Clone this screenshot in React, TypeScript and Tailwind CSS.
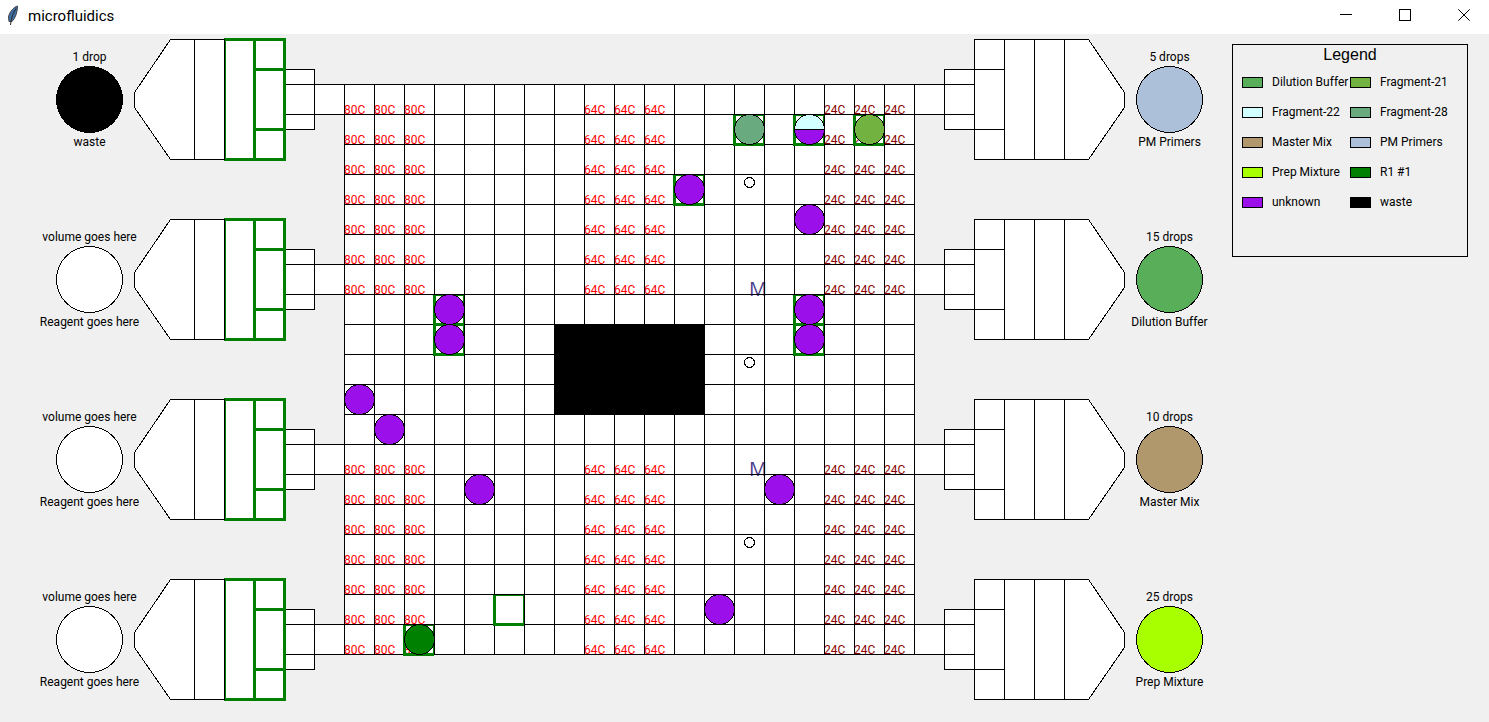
import React from "react";

type Tone = "dilution" | "f21" | "f22" | "f28" | "master" | "pm" | "prep" | "r1" | "unknown" | "waste" | "none";

const FILL: Record<Tone, string> = {
  dilution: "fill-[#59ae59]",
  f21: "fill-[#72b240]",
  f22: "fill-[#d2ffff]",
  f28: "fill-[#69ab7e]",
  master: "fill-[#b1986c]",
  pm: "fill-[#acc1d9]",
  prep: "fill-[#a8ff00]",
  r1: "fill-[#008000]",
  unknown: "fill-[#9a0fea]",
  waste: "fill-black",
  none: "fill-white",
};

const SWATCH: Record<Tone, string> = {
  dilution: "bg-[#59ae59]",
  f21: "bg-[#72b240]",
  f22: "bg-[#d2ffff]",
  f28: "bg-[#69ab7e]",
  master: "bg-[#b1986c]",
  pm: "bg-[#acc1d9]",
  prep: "bg-[#a8ff00]",
  r1: "bg-[#008000]",
  unknown: "bg-[#9a0fea]",
  waste: "bg-black",
  none: "bg-white",
};

interface Reservoir {
  volume: string;
  reagent: string;
  tone: Tone;
}

const INPUTS: Reservoir[] = [
  { volume: "1 drop", reagent: "waste", tone: "waste" },
  { volume: "volume goes here", reagent: "Reagent goes here", tone: "none" },
  { volume: "volume goes here", reagent: "Reagent goes here", tone: "none" },
  { volume: "volume goes here", reagent: "Reagent goes here", tone: "none" },
];

const OUTPUTS: Reservoir[] = [
  { volume: "5 drops", reagent: "PM Primers", tone: "pm" },
  { volume: "15 drops", reagent: "Dilution Buffer", tone: "dilution" },
  { volume: "10 drops", reagent: "Master Mix", tone: "master" },
  { volume: "25 drops", reagent: "Prep Mixture", tone: "prep" },
];

const LEGEND: { name: string; tone: Tone }[] = [
  { name: "Dilution Buffer", tone: "dilution" },
  { name: "Fragment-21", tone: "f21" },
  { name: "Fragment-22", tone: "f22" },
  { name: "Fragment-28", tone: "f28" },
  { name: "Master Mix", tone: "master" },
  { name: "PM Primers", tone: "pm" },
  { name: "Prep Mixture", tone: "prep" },
  { name: "R1 #1", tone: "r1" },
  { name: "unknown", tone: "unknown" },
  { name: "waste", tone: "waste" },
];

interface CellState {
  drop?: Tone;
  lower?: Tone;
  active?: boolean;
  sensor?: boolean;
  magnet?: boolean;
}

const SIZE = 19;

// Keyed by "column,row".
const CELLS: Record<string, CellState> = {
  "13,1": { drop: "f28", active: true },
  "15,1": { drop: "f22", lower: "unknown", active: true },
  "17,1": { drop: "f21", active: true },
  "11,3": { drop: "unknown", active: true },
  "13,3": { sensor: true },
  "15,4": { drop: "unknown" },
  "13,6": { magnet: true },
  "3,7": { drop: "unknown", active: true },
  "3,8": { drop: "unknown", active: true },
  "15,7": { drop: "unknown", active: true },
  "15,8": { drop: "unknown", active: true },
  "13,9": { sensor: true },
  "0,10": { drop: "unknown" },
  "1,11": { drop: "unknown" },
  "13,12": { magnet: true },
  "4,13": { drop: "unknown" },
  "14,13": { drop: "unknown" },
  "13,15": { sensor: true },
  "5,17": { active: true },
  "12,17": { drop: "unknown" },
  "2,18": { drop: "r1", active: true },
};

function heater(col: number, row: number) {
  if (row > 6 && row < 12) return null;
  if (col <= 2) return { text: "80C", color: "text-[#ff0000]" };
  if (col >= 8 && col <= 10) return { text: "64C", color: "text-[#ff0000]" };
  if (col >= 16) return { text: "24C", color: "text-[#8b0000]" };
  return null;
}

function Droplet({ tone, lower }: { tone: Tone; lower?: Tone }) {
  return (
    <svg viewBox="0 0 31 31" shapeRendering="crispEdges" className="absolute -top-px -left-px z-20 size-[31px]">
      <circle cx="15.5" cy="15.5" r="15" stroke="black" className={FILL[tone]} />
      {lower && <path d="M0.5 15.5 A15 15 0 0 0 30.5 15.5 Z" stroke="black" className={FILL[lower]} />}
    </svg>
  );
}

function Cell({ col, row }: { col: number; row: number }) {
  const blocked = col >= 7 && col <= 11 && row >= 8 && row <= 10;
  const heat = heater(col, row);
  const state = CELLS[`${col},${row}`] ?? {};
  return (
    <div className={`relative flex size-[30px] items-end border-t border-l border-black ${blocked ? "bg-black" : ""}`}>
      {heat && <span className={`-ml-px text-xs leading-2 ${heat.color}`}>{heat.text}</span>}
      {state.active && (
        <div className="absolute top-0 -left-0.5 z-10 size-[31px] border-t border-r border-b-3 border-l-3 border-[#008000]" />
      )}
      {state.drop && <Droplet tone={state.drop} lower={state.lower} />}
      {state.sensor && (
        <svg viewBox="0 0 11 11" shapeRendering="crispEdges" className="mx-auto mt-0.5 size-[11px] self-start">
          <circle cx="5.5" cy="5.5" r="5" fill="none" stroke="black" />
        </svg>
      )}
      {state.magnet && (
        <span className="ml-3.5 overflow-x-clip font-['Open_Sans',sans-serif] text-xl leading-[10px] text-[#483d8b]">M</span>
      )}
    </div>
  );
}

function Board() {
  const cells = Array.from({ length: SIZE * SIZE }, (_, i) => (
    <Cell key={i} col={i % SIZE} row={Math.floor(i / SIZE)} />
  ));
  return (
    <div className="mt-[46px] grid shrink-0 grid-cols-[repeat(19,30px)] self-start border-r border-b border-black bg-white">
      {cells}
    </div>
  );
}

function Label({ item }: { item: Reservoir }) {
  return (
    <div className="z-10 flex w-[89px] flex-col items-center text-xs leading-[18px] whitespace-nowrap">
      <span>{item.volume}</span>
      <svg viewBox="0 0 67 67" shapeRendering="crispEdges" className="size-[67px]">
        <circle cx="33.5" cy="33.5" r="33" stroke="black" className={FILL[item.tone]} />
      </svg>
      <span>{item.reagent}</span>
    </div>
  );
}

function InletDrawing() {
  return (
    <svg viewBox="0 0 210 123" shapeRendering="crispEdges" className="h-[123px] w-[210px]" fill="white" stroke="black">
      <path d="M180 46.5H210V76.5H180Z" stroke="none" />
      <path d="M150.5 31.5H180.5V91.5H150.5Z" />
      <path d="M150 46.5H210M150 76.5H210" />
      <path d="M90.5 1.5H36.5L0.5 54.5V69.5L36.5 121.5H90.5Z" />
      <path d="M60.5 1.5V121.5" />
      <path d="M90 1.5H150.5V121.5H90M120.5 1.5V121.5M120.5 31.5H150.5M120.5 91.5H150.5" stroke="#008000" strokeWidth="3" />
      <path d="M91.5 1V122" stroke="#008000" />
      <path d="M90.5 1V122" />
    </svg>
  );
}

function OutletDrawing() {
  return (
    <svg viewBox="0 0 210 123" shapeRendering="crispEdges" className="h-[123px] w-[210px]" fill="white" stroke="black">
      <path d="M0 46.5H30V76.5H0Z" stroke="none" />
      <path d="M59.5 1.5H173.5L209.5 54.5V69.5L173.5 121.5H59.5Z" />
      <path d="M29.5 31.5H89.5V91.5H29.5Z" />
      <path d="M0 46.5H59.5M0 76.5H59.5M59.5 1.5V121.5M89.5 1.5V121.5M119.5 1.5V121.5M149.5 1.5V121.5" fill="none" />
    </svg>
  );
}

function Legend() {
  return (
    <section className="mt-1.5 ml-[18px] w-[236px] shrink-0 self-start border border-black pb-[39px]">
      <h2 className="text-center font-['Liberation_Sans',sans-serif] text-base leading-5">Legend</h2>
      <ul className="mt-0.5 ml-[9px] grid grid-cols-[108px_108px] text-xs">
        {LEGEND.map((item) => (
          <li key={item.name} className="flex h-[30px] items-center gap-[9px] whitespace-nowrap">
            <span className={`h-[11px] w-[21px] shrink-0 border border-black ${SWATCH[item.tone]}`} />
            {item.name}
          </li>
        ))}
      </ul>
    </section>
  );
}

function TitleBar() {
  return (
    <header className="flex h-[34px] items-center bg-white pb-0.5">
      <svg viewBox="0 0 14 22" className="ml-1.5 h-[22px] w-3.5">
        <path d="M11.5 1C8 2 3.5 6.5 2.5 12L3 16.5L6 16.5C9.5 13 11.5 7 11.5 1Z" fill="#3f6fa6" stroke="#444" strokeWidth="1" />
        <path d="M10 3.5C7 8 5.5 12 4.5 20" fill="none" stroke="#222" strokeWidth="1" />
      </svg>
      <h1 className="ml-2 text-[15px] leading-5">microfluidics</h1>
      <div className="ml-auto flex gap-[9px] self-stretch pb-0.5">
        <button aria-label="Minimize" className="flex w-[50px] items-center justify-center">
          <svg viewBox="0 0 12 12" className="size-3" shapeRendering="crispEdges" stroke="black">
            <path d="M0 5.5H12" />
          </svg>
        </button>
        <button aria-label="Maximize" className="flex w-[50px] items-center justify-center">
          <svg viewBox="0 0 12 12" className="size-3" shapeRendering="crispEdges" stroke="black" fill="none">
            <path d="M0.5 0.5H11.5V11.5H0.5Z" />
          </svg>
        </button>
        <button aria-label="Close" className="flex w-[50px] items-center justify-center">
          <svg viewBox="0 0 12 12" className="size-3" stroke="black">
            <path d="M0.3 0.3L11.7 11.7M11.7 0.3L0.3 11.7" />
          </svg>
        </button>
      </div>
    </header>
  );
}

export default function App() {
  return (
    <div className="min-h-screen bg-[#f0f0f0] font-[Roboto,'Open_Sans',sans-serif] text-black">
      <TitleBar />
      <main className="flex pt-1 pl-[45px]">
        <div className="flex shrink-0 flex-col gap-[57px]">
          {INPUTS.map((item, i) => (
            <div key={i} className="flex h-[123px] items-center">
              <Label item={item} />
              <InletDrawing />
            </div>
          ))}
        </div>
        <Board />
        <div className="flex shrink-0 flex-col gap-[57px]">
          {OUTPUTS.map((item) => (
            <div key={item.reagent} className="flex h-[123px] items-center">
              <OutletDrawing />
              <Label item={item} />
            </div>
          ))}
        </div>
        <Legend />
      </main>
    </div>
  );
}
